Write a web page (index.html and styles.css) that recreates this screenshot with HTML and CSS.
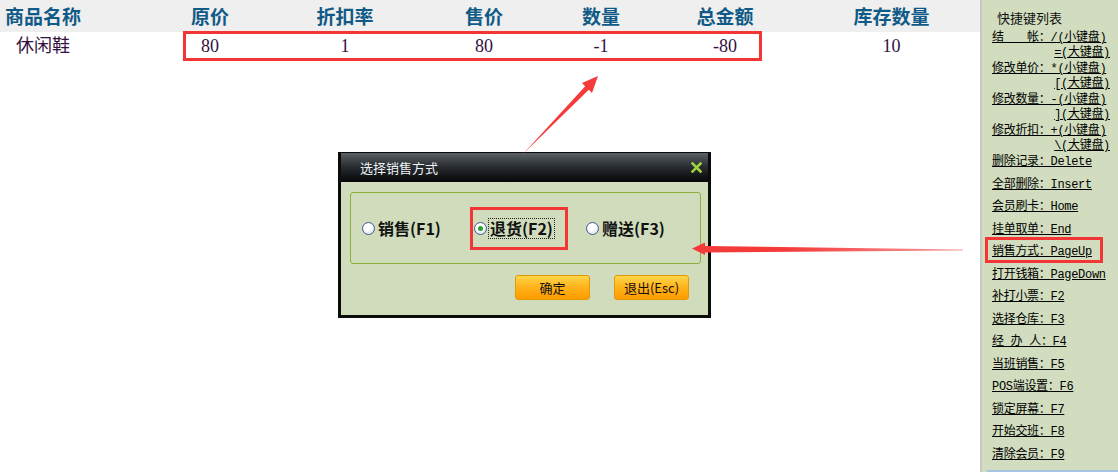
FILE: index.html
```html
<!DOCTYPE html>
<html lang="zh-CN">
<head>
  <meta charset="UTF-8" />
  <title>选择销售方式</title>
  <link rel="stylesheet" href="styles.css">
</head>
<body>
<div class="page">

  <div class="sales">
    <div class="sales-row sales-head">
      <div class="cell cell-name">商品名称</div>
      <div class="cell">原价</div>
      <div class="cell">折扣率</div>
      <div class="cell">售价</div>
      <div class="cell">数量</div>
      <div class="cell">总金额</div>
      <div class="cell">库存数量</div>
    </div>
    <div class="sales-row sales-item">
      <div class="cell cell-name">休闲鞋</div>
      <div class="cell">80</div>
      <div class="cell">1</div>
      <div class="cell">80</div>
      <div class="cell">-1</div>
      <div class="cell">-80</div>
      <div class="cell">10</div>
    </div>
  </div>

  <div class="shortcuts">
    <div class="shortcuts-title">快捷键列表</div>
    <div class="key-list">
      <div class="key"><span>结　　帐：/(小键盘)</span><span class="key-alt">=(大键盘)</span></div>
      <div class="key"><span>修改单价：*(小键盘)</span><span class="key-alt">[(大键盘)</span></div>
      <div class="key"><span>修改数量：-(小键盘)</span><span class="key-alt">](大键盘)</span></div>
      <div class="key"><span>修改折扣：+(小键盘)</span><span class="key-alt">\(大键盘)</span></div>
      <div class="key key-single"><span>删除记录：Delete</span></div>
      <div class="key key-single"><span>全部删除：Insert</span></div>
      <div class="key key-single"><span>会员刷卡：Home</span></div>
      <div class="key key-single"><span>挂单取单：End</span></div>
      <div class="key key-single"><span>销售方式：PageUp</span></div>
      <div class="key key-single"><span>打开钱箱：PageDown</span></div>
      <div class="key key-single"><span>补打小票：F2</span></div>
      <div class="key key-single"><span>选择仓库：F3</span></div>
      <div class="key key-single"><span>经 办 人：F4</span></div>
      <div class="key key-single"><span>当班销售：F5</span></div>
      <div class="key key-single"><span>POS端设置：F6</span></div>
      <div class="key key-single"><span>锁定屏幕：F7</span></div>
      <div class="key key-single"><span>开始交班：F8</span></div>
      <div class="key key-single"><span>清除会员：F9</span></div>
    </div>
    <div class="shortcuts-line"></div>
  </div>

  <div class="dialog">
    <div class="dialog-title">
      <span>选择销售方式</span>
      <svg class="dialog-close" width="11" height="11" viewBox="0 0 11 11">
        <path d="M1.5 1.5 L9.5 9.5 M9.5 1.5 L1.5 9.5" stroke="#9fd23c" stroke-width="2.6" stroke-linecap="square"/>
      </svg>
    </div>
    <div class="dialog-group">
      <div class="choice"><span class="radio"></span><span class="choice-text">销售(F1)</span></div>
      <div class="choice"><span class="radio radio-on"></span><span class="choice-text choice-focus">退货(F2)</span></div>
      <div class="choice"><span class="radio"></span><span class="choice-text">赠送(F3)</span></div>
    </div>
    <div class="dialog-actions">
      <button class="btn">确定</button>
      <button class="btn">退出(Esc)</button>
    </div>
  </div>

  <div class="mark mark-row"></div>
  <div class="mark mark-choice"></div>
  <div class="mark mark-key"></div>

  <svg class="arrows" width="1118" height="472" viewBox="0 0 1118 472">
    <defs>
      <linearGradient id="fade" gradientUnits="userSpaceOnUse" x1="692" y1="0" x2="963" y2="0">
        <stop offset="0" stop-color="#f53a3a"/>
        <stop offset="0.35" stop-color="#f53a3a"/>
        <stop offset="1" stop-color="#f7a0a0"/>
      </linearGradient>
    </defs>
    <polygon points="523,154 585.2,86.3 582,83 598,76 592,93 588.8,89.7" fill="#f53a3a"/>
    <polygon points="692,248.5 705,242.5 705,246 963,249.6 963,250.4 705,252.5 705,255" fill="url(#fade)"/>
  </svg>

</div>
</body>
</html>
```

FILE: styles.css
```css
* {
  box-sizing: border-box;
}
body {
  margin: 0;
  background: #fff;
  font-family: "Noto Sans CJK SC", sans-serif;
}
.page {
  position: relative;
  display: flex;
  width: 1118px;
  height: 472px;
  overflow: hidden;
}

/* sales table */
.sales {
  flex: 0 0 980px;
}
.sales-row {
  display: grid;
  grid-template-columns: 143px 134px 136px 142px 92px 156px 177px;
  align-items: center;
}
.sales-head {
  height: 32px;
  background: #efefef;
  color: #0f5a86;
  font-weight: bold;
  font-size: 19px;
}
.sales-item {
  height: 27px;
  color: #35103f;
  font-family: "Liberation Serif", "Noto Sans CJK SC", serif;
  font-size: 18px;
}
.cell {
  text-align: center;
  white-space: nowrap;
  line-height: 22px;
}
.cell-name {
  text-align: left;
  padding-left: 5px;
}
.sales-item .cell-name {
  padding-left: 16px;
}

/* shortcut list */
.shortcuts {
  flex: 1;
  display: flex;
  flex-direction: column;
  background: #d1ddbe;
  border-left: 2px solid #c6c9c4;
  padding: 10px 8px 0 10px;
}
.shortcuts-title {
  margin: 0 0 6px 5px;
  font-size: 13px;
  line-height: 15px;
  color: #111;
}
.key {
  font-family: "Liberation Mono", "Noto Sans CJK SC", monospace;
  font-size: 12px;
  letter-spacing: -0.3px;
  line-height: 15px;
  color: #000;
  white-space: nowrap;
  margin-bottom: 1px;
}
.key span {
  display: block;
  text-decoration: underline;
}
.key-alt {
  text-align: right;
}
.key-single {
  margin-bottom: 7.5px;
}
.shortcuts-line {
  margin: auto -8px 0 -5px;
  height: 2px;
  background: #a6c4e6;
}

/* dialog */
.dialog {
  position: absolute;
  left: 338px;
  top: 152px;
  width: 373px;
  height: 166px;
  border: 3px solid #0b0b0b;
  border-top-width: 1px;
  background: #d0dcbc;
}
.dialog-title {
  height: 29px;
  display: flex;
  align-items: center;
  justify-content: space-between;
  padding: 0 6px 0 19px;
  background: linear-gradient(#5b6166, #2a2e32 45%, #050708);
  color: #eef2f4;
  font-size: 13px;
}
.dialog-group {
  display: flex;
  align-items: center;
  height: 72px;
  margin: 10px 7px 0 9px;
  padding-left: 11px;
  border: 1px solid #8cb03a;
  border-radius: 3px;
}
.choice {
  display: flex;
  align-items: center;
  width: 112px;
  color: #111;
  font-weight: bold;
  font-size: 16px;
}
.radio {
  width: 13px;
  height: 13px;
  margin-right: 2px;
  border: 1px solid #3d5e8e;
  border-radius: 50%;
  background: radial-gradient(circle at 40% 35%, #fff 30%, #d3d9e0 100%);
  display: flex;
  align-items: center;
  justify-content: center;
}
.radio-on::after {
  content: "";
  width: 5px;
  height: 5px;
  border-radius: 50%;
  background: #26a030;
}
.choice-text {
  line-height: 19px;
  padding: 0 1px;
}
.choice-focus {
  outline: 1px dotted #222;
}
.dialog-actions {
  display: flex;
  justify-content: flex-end;
  gap: 24px;
  margin: 11px 19px 0 0;
}
.btn {
  width: 75px;
  height: 25px;
  padding: 0;
  border: 1px solid #e39a00;
  border-radius: 3px;
  background: linear-gradient(#ffd64a, #ffb21a 50%, #ff9c00);
  font-family: "Noto Sans CJK SC", sans-serif;
  font-size: 13px;
  color: #111;
}

/* annotations */
.mark {
  position: absolute;
  border: 3px solid #f23636;
}
.mark-row {
  left: 183px;
  top: 31px;
  width: 579px;
  height: 30px;
}
.mark-choice {
  left: 470px;
  top: 207px;
  width: 98px;
  height: 43px;
}
.mark-key {
  left: 985px;
  top: 237px;
  width: 118px;
  height: 26px;
}
.arrows {
  position: absolute;
  left: 0;
  top: 0;
  pointer-events: none;
}
```
